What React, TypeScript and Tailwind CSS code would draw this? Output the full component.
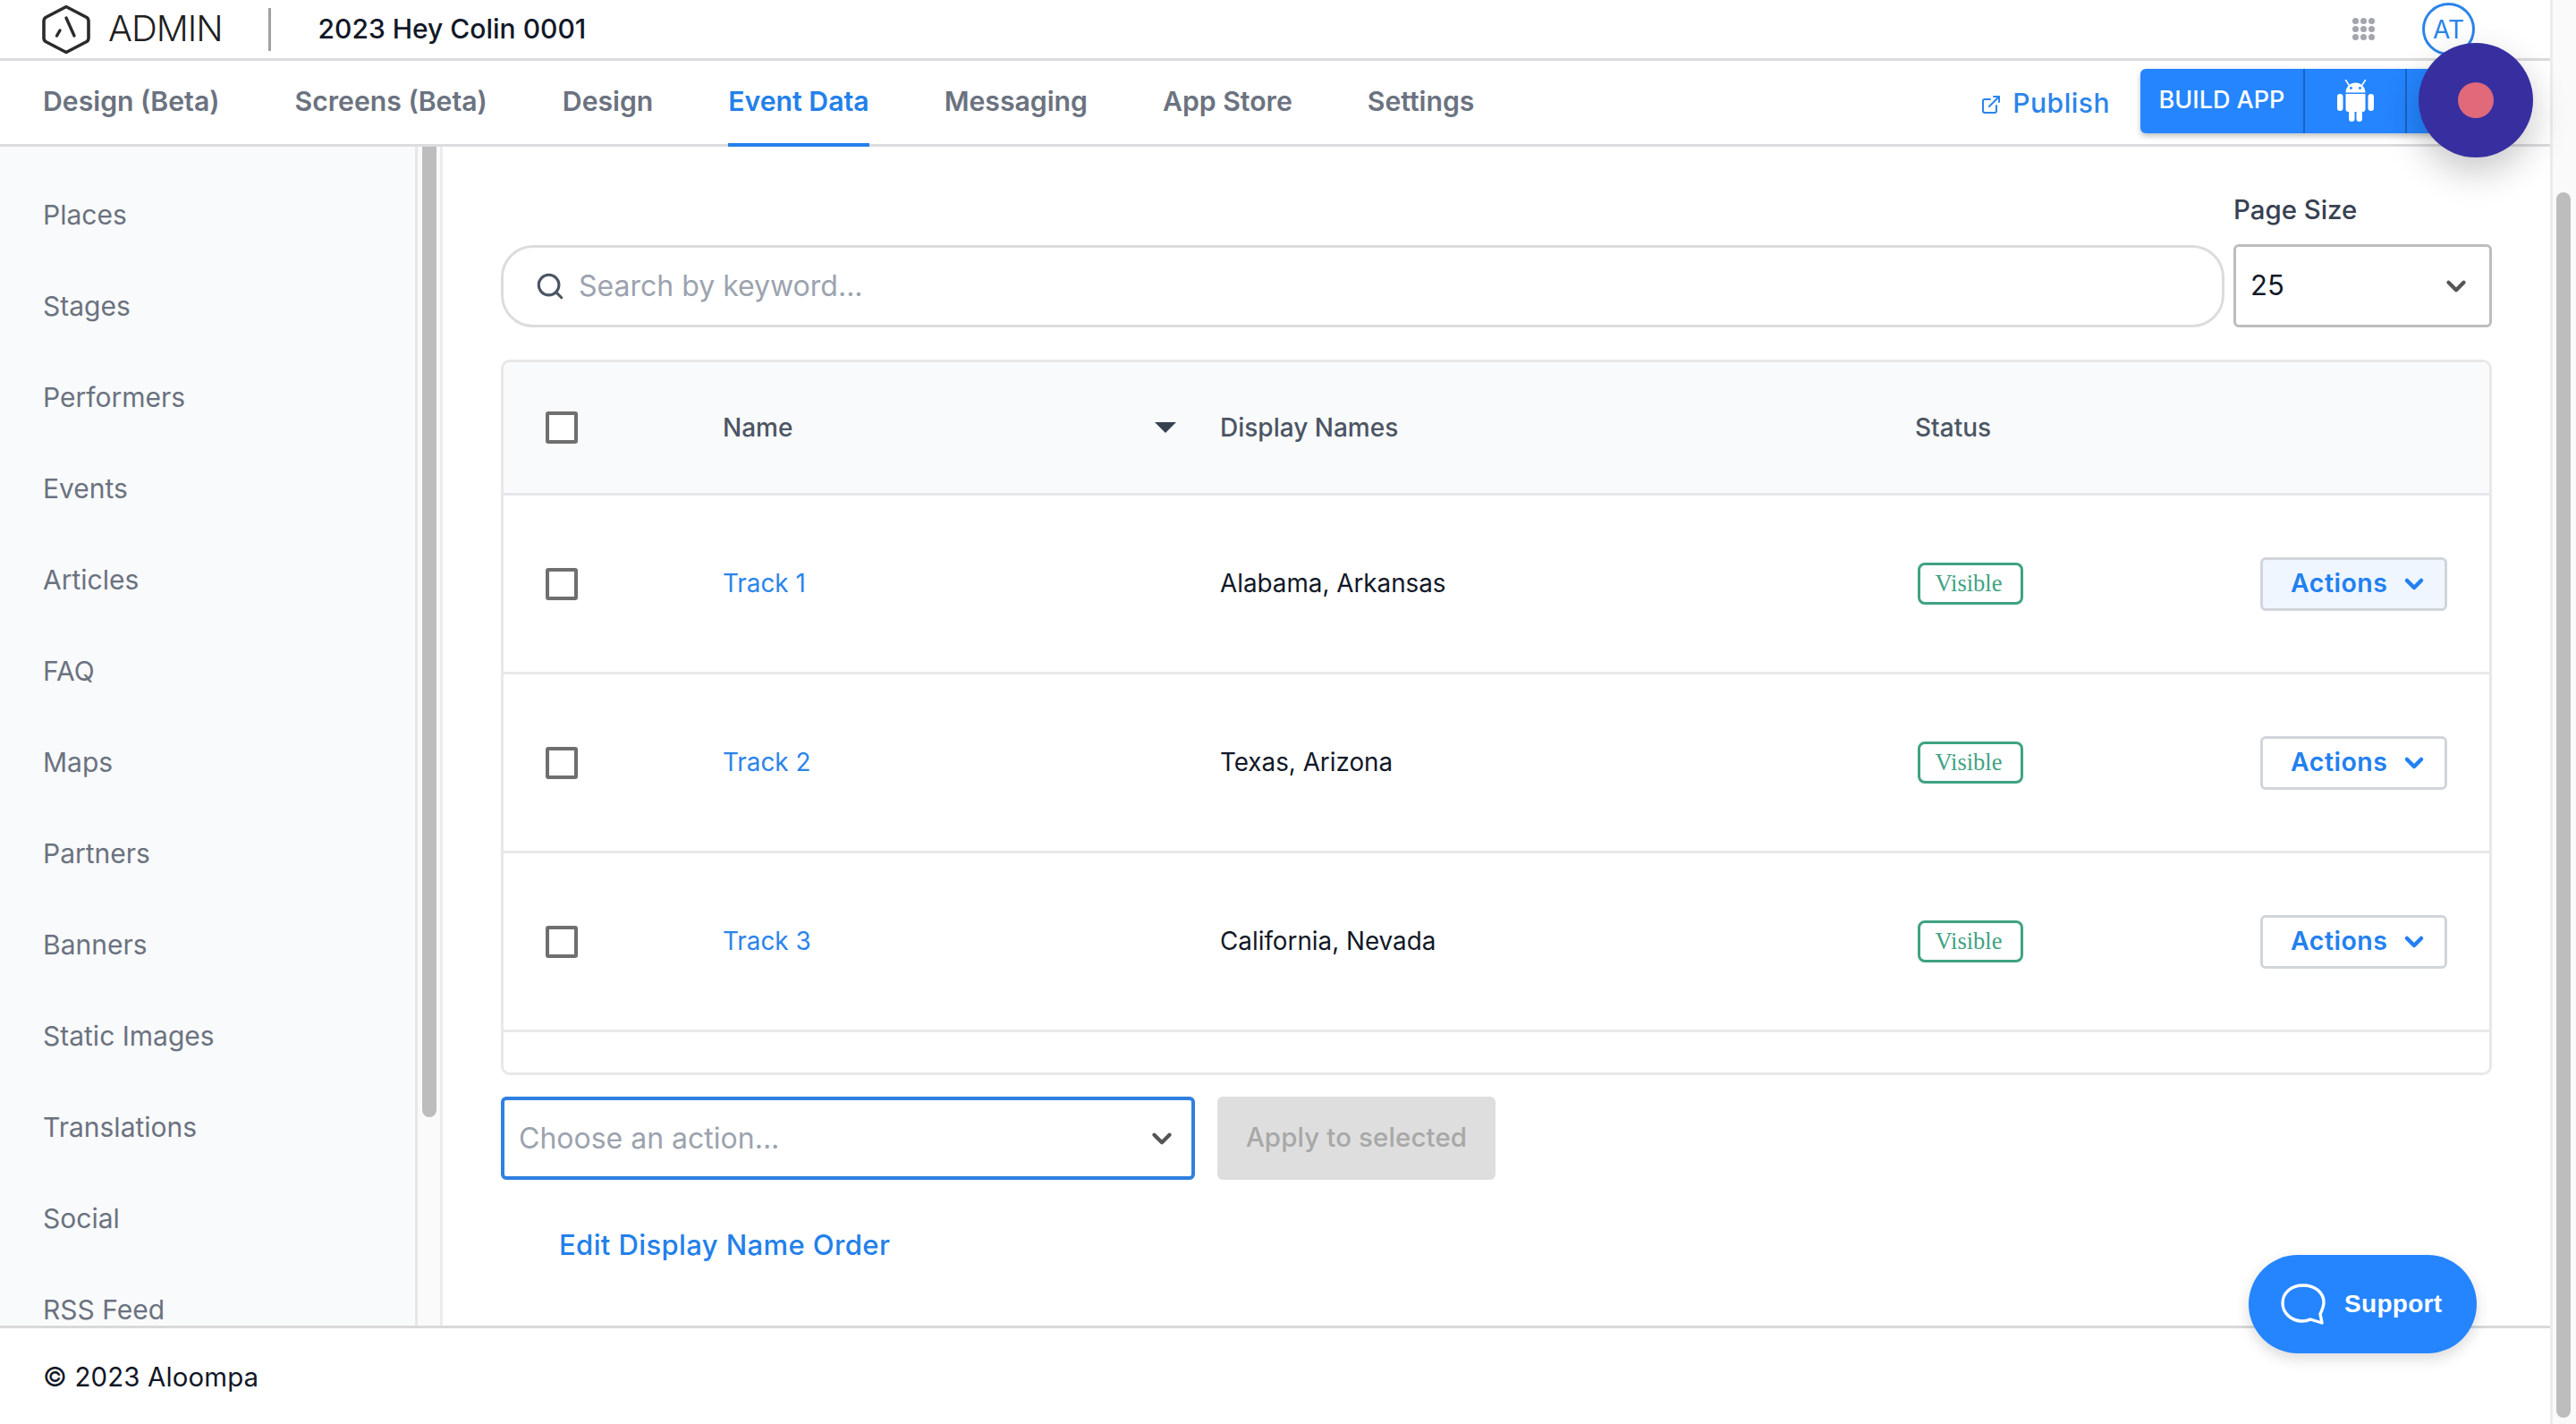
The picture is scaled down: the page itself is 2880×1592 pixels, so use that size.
import React from 'react';
import { ChevronDown, ExternalLink, Search } from 'lucide-react';

const tabs = ['Design (Beta)', 'Screens (Beta)', 'Design', 'Event Data', 'Messaging', 'App Store', 'Settings'];

const sideItems = [
  'Places',
  'Stages',
  'Performers',
  'Events',
  'Articles',
  'FAQ',
  'Maps',
  'Partners',
  'Banners',
  'Static Images',
  'Translations',
  'Social',
  'RSS Feed'
];

const tracks = [
  { name: 'Track 1', display: 'Alabama, Arkansas', hover: true },
  { name: 'Track 2', display: 'Texas, Arizona', hover: false },
  { name: 'Track 3', display: 'California, Nevada', hover: false }
];

const Logo = () => (
  <svg width="54" height="56" viewBox="0 0 54 56" fill="none" stroke="#2b2b2b" strokeLinecap="round" strokeLinejoin="round">
    <path d="M27 2.5 L50 14.5 Q52 16 52 18 V38 Q52 40 50 41.5 L27 53.5 L4 41.5 Q2 40 2 38 V18 Q2 16 4 14.5 Z" strokeWidth="3.6" />
    <path d="M27 15 L36 35" strokeWidth="3.4" />
    <path d="M20 29 L16.5 35" strokeWidth="3.4" />
  </svg>
);

const Dots = () => (
  <div className="grid grid-cols-3 gap-x-[2px] gap-y-[2px] w-[25px]">
    {Array.from({ length: 9 }).map((_, i) => (
      <div key={i} className="w-[7px] h-[7px] rounded-full bg-[#a3a5ad]" />
    ))}
  </div>
);

const AndroidIcon = () => (
  <svg width="41" height="47" viewBox="0 0 41 47" fill="white">
    <path d="M9.5 14.5 a11 11 0 0 1 22 0 z" />
    <path d="M13 6 L9.5 0.5 M28 6 L31.5 0.5" stroke="white" strokeWidth="1.5" strokeLinecap="round" />
    <circle cx="15.5" cy="9.5" r="1.4" fill="#2485ff" />
    <circle cx="25.5" cy="9.5" r="1.4" fill="#2485ff" />
    <path d="M9.5 16 H31.5 V33 Q31.5 36 28.5 36 H12.5 Q9.5 36 9.5 33 Z" />
    <rect x="0" y="16" width="6.5" height="19" rx="3.25" />
    <rect x="34.5" y="16" width="6.5" height="19" rx="3.25" />
    <rect x="13" y="34" width="6.5" height="13" rx="3.25" />
    <rect x="21.5" y="34" width="6.5" height="13" rx="3.25" />
  </svg>
);

const Checkbox = () => <div className="w-[36px] h-[36px] border-[4px] border-[#6f6f6f] rounded-[3px] bg-white" />;

const SupportIcon = () => (
  <svg width="50" height="46" viewBox="0 0 50 46" fill="none" stroke="white" strokeWidth="3.4" strokeLinejoin="round">
    <path d="M25 2 C12 2 2 10 2 22 C2 33 12 42 24 42 C28 42 31 41 33 40 L46 44 L44 34 C46 30 48 26 48 21 C48 10 38 2 25 2 Z" />
  </svg>
);

const App: React.FC = () => {
  return (
    <div className="relative flex w-full h-screen overflow-hidden bg-white [font-family:Inter,sans-serif]">
      <div className="flex flex-col w-[2851px] shrink-0">
        {/* top bar */}
        <div className="flex items-center h-[68px] shrink-0 border-b-[3px] border-[#dcdce0] pl-[47px] pr-[84px]">
          <Logo />
          <span className="ml-[20px] mt-[-2px] text-[40px] leading-none font-light tracking-[-1px] text-[#1f1f1f]">ADMIN</span>
          <div className="ml-[51px] w-[3px] h-[48px] bg-[#a0a0a0]" />
          <span className="ml-[53px] text-[30px] font-medium text-[#111827]">2023 Hey Colin 0001</span>
          <div className="ml-auto flex items-center gap-[53px]">
            <Dots />
            <div className="w-[59px] h-[59px] rounded-full border-[3px] border-[#2b84ea] flex items-center justify-center text-[28px] text-[#2b84ea]">
              AT
            </div>
          </div>
        </div>

        {/* tabs */}
        <div className="flex items-stretch h-[96px] shrink-0 border-b-[3px] border-[#dcdce0] pl-[48px]">
          <div className="flex gap-[84px]">
            {tabs.map((tab) => (
              <div
                key={tab}
                className={
                  tab === 'Event Data'
                    ? 'flex items-center text-[30.2px] font-semibold text-[#2280ea] border-b-[4px] border-[#2280ea] -mb-[3px]'
                    : 'flex items-center text-[30.2px] font-semibold text-[#6b7280] pb-[2px]'
                }
              >
                {tab}
              </div>
            ))}
          </div>
          <div className="ml-auto flex items-center pr-[60px]">
            <ExternalLink size={24} strokeWidth={2} className="text-[#2b84ea] mr-[12px] mt-[4px]" />
            <span className="text-[30px] font-medium text-[#2b84ea] tracking-[0.5px] mt-[2px]">Publish</span>
            <div className="ml-[34px] flex h-[72px] -mt-[4px] bg-[#2485ff] rounded-[6px] text-white shadow-[0_3px_6px_rgba(0,0,0,0.25)]">
              <div className="w-[184px] flex items-center justify-center text-[27px] font-medium border-r-[2px] border-[#1a64c2]">BUILD APP</div>
              <div className="w-[114px] flex items-center justify-center border-r-[2px] border-[#1a64c2]">
                <AndroidIcon />
              </div>
              <div className="w-[100px]" />
            </div>
          </div>
        </div>

        {/* body */}
        <div className="flex flex-1 min-h-0">
          <div className="w-[467px] shrink-0 bg-[#f9fafb] border-r-[3px] border-[#e5e7eb] pt-[25px] pl-[48px] overflow-hidden">
            {sideItems.map((item) => (
              <div key={item} className="h-[102px] shrink-0 flex items-center text-[30px] text-[#6b7280]">
                {item}
              </div>
            ))}
          </div>
          <div className="w-[28px] shrink-0 bg-[#fafafa] border-r-[3px] border-[#ececec] pl-[5px]">
            <div className="w-[16px] h-[1085px] rounded-b-[8px] bg-[#bdbdbd]" />
          </div>

          <div className="flex-1 min-w-0 pt-[51px] px-[65px]">
            <div className="flex items-end gap-[10px]">
              <div className="flex-1 h-[92px] rounded-[36px] border-[3px] border-[#dcdcdc] flex items-center pl-[35px]">
                <Search size={34} strokeWidth={2.2} className="text-[#4b5563]" />
                <span className="ml-[15px] text-[32px] text-[#9ca3af]">Search by keyword...</span>
              </div>
              <div className="w-[289px]">
                <div className="h-[40px] mb-[18px] flex items-center text-[29.4px] font-medium text-[#374151]">Page Size</div>
                <div className="h-[93px] rounded-[6px] border-[3px] border-[#bdbdbd] flex items-center justify-between pl-[16px] pr-[20px]">
                  <span className="text-[31px] text-[#111827]">25</span>
                  <ChevronDown size={34} strokeWidth={3} className="text-[#555]" />
                </div>
              </div>
            </div>

            <div className="mt-[36px] h-[800px] border-[3px] border-[#e8e8e8] rounded-[10px] overflow-hidden">
              <div className="grid grid-cols-[198px_556px_777px_1fr] items-center h-[149px] pl-[47px] bg-[#f9fafb] border-b-[3px] border-[#e5e7eb] text-[28px] font-medium text-[#4b5563]">
                <Checkbox />
                <div className="flex items-center justify-between pr-[49px]">
                  <span>Name</span>
                  <svg width="24" height="12" viewBox="0 0 24 12" fill="#374151">
                    <path d="M0 0 H24 L12 12 Z" />
                  </svg>
                </div>
                <div>Display Names</div>
                <div>Status</div>
              </div>
              {tracks.map((track) => (
                <div
                  key={track.name}
                  className="grid grid-cols-[198px_556px_777px_1fr] items-center h-[200px] pl-[47px] border-b-[3px] border-[#e8e8e8] text-[27.8px]"
                >
                  <Checkbox />
                  <div className="text-[#2b84ea] pt-[1px]">{track.name}</div>
                  <div className="text-[#111827] pt-[1px]">{track.display}</div>
                  <div className="flex items-center justify-between pr-[47px] pl-[3px]">
                    <div className="w-[118px] h-[47px] rounded-[8px] border-[3px] border-[#3fa283] flex items-center justify-center pr-[4px] [font-family:'Liberation_Serif',serif] text-[26.5px] text-[#3fa283]">
                      Visible
                    </div>
                    <div
                      className={
                        track.hover
                          ? 'w-[209px] h-[60px] rounded-[6px] border-[3px] border-[#d1d5db] bg-[#eff6ff] flex items-center pl-[31px] text-[#2280f0]'
                          : 'w-[209px] h-[60px] rounded-[6px] border-[3px] border-[#d1d5db] bg-white flex items-center pl-[31px] text-[#2280f0]'
                      }
                    >
                      <span className="text-[28.5px] font-semibold tracking-[0.5px]">Actions</span>
                      <ChevronDown size={32} strokeWidth={3.4} className="ml-[14px]" />
                    </div>
                  </div>
                </div>
              ))}
            </div>

            <div className="mt-[24px] flex items-stretch gap-[25px] h-[93px]">
              <div className="w-[776px] rounded-[6px] border-[4px] border-[#2f80e0] flex items-center justify-between pl-[16px] pr-[16px]">
                <span className="text-[32px] text-[#9ca3af]">Choose an action...</span>
                <ChevronDown size={34} strokeWidth={3} className="text-[#555]" />
              </div>
              <div className="w-[311px] rounded-[6px] bg-[#dedede] flex items-center justify-center text-[29.4px] font-medium text-[#a8a8a8] tracking-[0.15px]">
                Apply to selected
              </div>
            </div>

            <div className="mt-[53px] ml-[65px] h-[40px] flex items-center text-[31px] font-medium text-[#2280ea] tracking-[0.4px]">
              Edit Display Name Order
            </div>
          </div>
        </div>

        {/* footer */}
        <div className="h-[110px] shrink-0 border-t-[3px] border-[#d9d9d9] pl-[48px] pt-[4px] flex items-center text-[29.4px] tracking-[0.15px] text-[#111827]">
          © 2023 Aloompa
        </div>
      </div>

      {/* page scrollbar */}
      <div className="flex-1 bg-[#fafafa] border-l-[3px] border-[#ececec] pt-[215px] pl-[4px]">
        <div className="w-[16px] h-[1370px] rounded-full bg-[#bdbdbd]" />
      </div>

      {/* floating record button */}
      <div className="absolute left-[2704px] top-[48px] w-[128px] h-[128px] rounded-full bg-[#372fa0] flex items-center justify-center shadow-[0_16px_40px_rgba(0,0,0,0.22)]">
        <div className="w-[40px] h-[40px] rounded-full bg-[#e0697a]" />
      </div>

      {/* support */}
      <div className="absolute left-[2514px] top-[1403px] w-[255px] h-[110px] rounded-full bg-[#2485ff] flex items-center pl-[36px] shadow-[0_6px_16px_rgba(0,0,0,0.15)]">
        <SupportIcon />
        <span className="ml-[21px] [font-family:'Liberation_Sans',sans-serif] text-[28px] font-bold text-white tracking-[0.3px]">Support</span>
      </div>
    </div>
  );
};

export default App;
